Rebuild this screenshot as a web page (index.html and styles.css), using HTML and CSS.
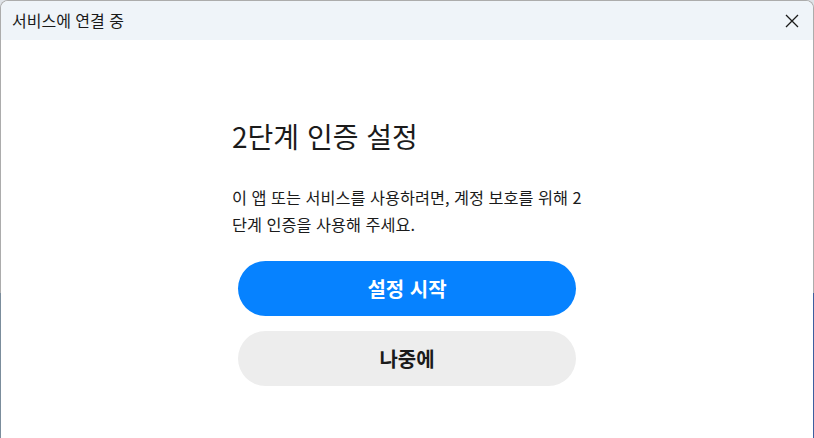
FILE: index.html
```html
<!DOCTYPE html>
<html lang="ko">
<head>
  <meta charset="UTF-8">
  <title>서비스에 연결 중</title>
  <link rel="stylesheet" href="styles.css">
</head>
<body>
  <div class="frame">
    <div class="window">
      <div class="titlebar">
        <span class="title">서비스에 연결 중</span>
        <button class="close" aria-label="닫기">
          <svg width="14" height="14" viewBox="0 0 14 14">
            <path d="M1 1 L13 13 M13 1 L1 13" stroke="#1a1a1a" stroke-width="1.3" fill="none"/>
          </svg>
        </button>
      </div>

      <div class="content">
        <div class="panel">
          <h1>2단계 인증 설정</h1>
          <p>이 앱 또는 서비스를 사용하려면, 계정 보호를 위해 2 단계 인증을 사용해 주세요.</p>
          <div class="actions">
            <button class="btn primary">설정 시작</button>
            <button class="btn secondary">나중에</button>
          </div>
        </div>
      </div>
    </div>
  </div>
</body>
</html>
```

FILE: styles.css
```css
html, body {
  margin: 0;
  height: 100%;
}
body {
  font-family: "Noto Sans CJK KR", "Noto Sans", sans-serif;
  background-color: #dfe3e8;
  overflow: hidden;
}
.frame {
  height: 100%;
  padding: 1px 1px 0 1px;
  box-sizing: border-box;
  border-radius: 8px 8px 0 0;
  background:
    linear-gradient(to bottom, #acacac 0, #acacac 293px, transparent 293px),
    linear-gradient(to right, #7b8d9c, #3d5f9f);
}
.window {
  height: 100%;
  background-color: #FFFFFF;
  border-radius: 7px 7px 0 0;
  overflow: hidden;
  display: flex;
  flex-direction: column;
}
.titlebar {
  height: 39px;
  flex: none;
  background-color: #EFF4F9;
  display: flex;
  align-items: center;
  justify-content: space-between;
  padding: 0 0 0 11px;
}
.title {
  font-size: 16px;
  color: #1a1a1a;
  margin-top: -2px;
}
.close {
  width: 46px;
  height: 39px;
  border: none;
  background: none;
  padding: 0;
  margin-right: -2px;
  display: flex;
  align-items: center;
  justify-content: center;
}
.content {
  flex: 1;
  display: flex;
  justify-content: center;
}
.panel {
  width: 352px;
  padding-top: 76px;
  margin-left: 2px;
}
h1 {
  font-size: 28px;
  font-weight: 400;
  color: #1b1b1b;
  margin: 0 0 28px 0;
  line-height: 40px;
}
p {
  font-size: 16.3px;
  color: #1b1b1b;
  line-height: 27px;
  margin: 0 0 23px 0;
}
.actions {
  display: flex;
  flex-direction: column;
  gap: 15px;
  padding: 0 8px 0 6px;
}
.btn {
  height: 55px;
  border: none;
  border-radius: 28px;
  font-family: inherit;
  font-size: 20px;
  font-weight: 700;
  cursor: pointer;
}
.primary {
  background-color: #0682FF;
  color: #FFFFFF;
}
.secondary {
  background-color: #EDEDED;
  color: #1b1b1b;
}
```
